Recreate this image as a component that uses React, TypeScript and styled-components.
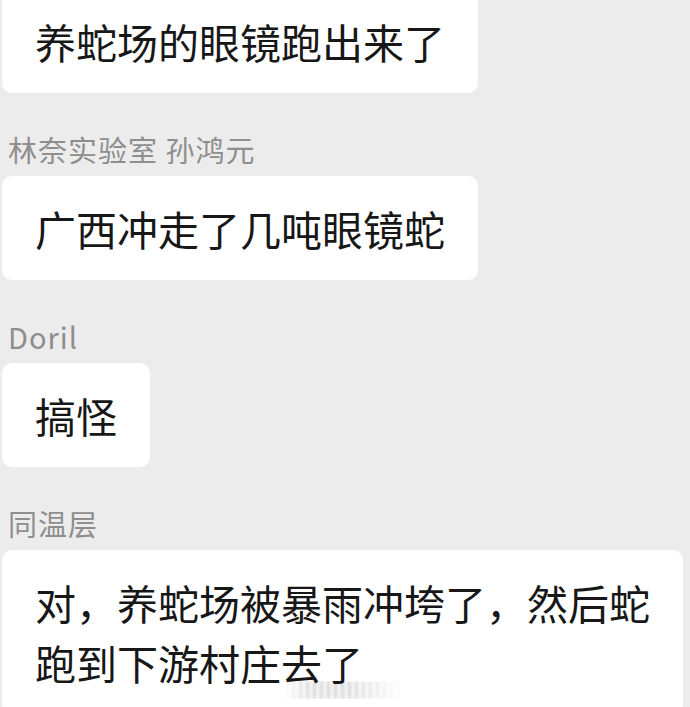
import React from "react";
import styled, { createGlobalStyle } from "styled-components";

const GlobalStyle = createGlobalStyle`
  html, body {
    margin: 0;
    padding: 0;
    background: #ededed;
  }
  body {
    font-family: "Noto Sans CJK SC", "Noto Sans", sans-serif;
    -webkit-font-smoothing: antialiased;
  }
`;

const Thread = styled.main`
  display: flex;
  flex-direction: column;
  align-items: flex-start;
  padding: 0 7px 0 2px;
  height: 707px;
  overflow: hidden;
  box-sizing: border-box;
  background: #ececec;
`;

const Message = styled.section<{ $first?: boolean }>`
  display: flex;
  flex-direction: column;
  align-items: flex-start;
  max-width: 100%;
  margin-top: ${(p) => (p.$first ? "-11px" : "39px")};
`;

const Sender = styled.div`
  padding-left: 6px;
  margin-bottom: 10px;
  font-size: 29px;
  line-height: 34px;
  letter-spacing: 1px;
  color: #8e8e8e;
  white-space: nowrap;
`;

const Bubble = styled.div`
  position: relative;
  box-sizing: border-box;
  max-width: 681px;
  padding: 22px 33px;
  background: #ffffff;
  border-radius: 10px;
  font-size: 41px;
  line-height: 60px;
  color: #171717;
`;

/* faint blurred site stamp that sits over the last bubble */
const Stamp = styled.span`
  position: absolute;
  left: 283px;
  top: 131px;
  width: 118px;
  height: 18px;
  background: repeating-linear-gradient(
    to right,
    rgba(0, 0, 0, 0.16) 0 3px,
    rgba(0, 0, 0, 0.03) 3px 7px
  );
  -webkit-mask-image: linear-gradient(to right, transparent, #000 20%, #000 55%, transparent);
  mask-image: linear-gradient(to right, transparent, #000 20%, #000 55%, transparent);
  filter: blur(1.5px);
  pointer-events: none;
`;

type Item = { sender?: string; text: string; stamp?: boolean };

const items: Item[] = [
  { text: "养蛇场的眼镜跑出来了" },
  { sender: "林奈实验室 孙鸿元", text: "广西冲走了几吨眼镜蛇" },
  { sender: "Doril", text: "搞怪" },
  {
    sender: "同温层",
    text: "对，养蛇场被暴雨冲垮了，然后蛇跑到下游村庄去了",
    stamp: true,
  },
];

export default function App() {
  return (
    <>
      <GlobalStyle />
      <Thread>
        {items.map((m, i) => (
          <Message key={i} $first={i === 0}>
            {m.sender && <Sender>{m.sender}</Sender>}
            <Bubble>
              {m.text}
              {m.stamp && <Stamp aria-hidden />}
            </Bubble>
          </Message>
        ))}
      </Thread>
    </>
  );
}
